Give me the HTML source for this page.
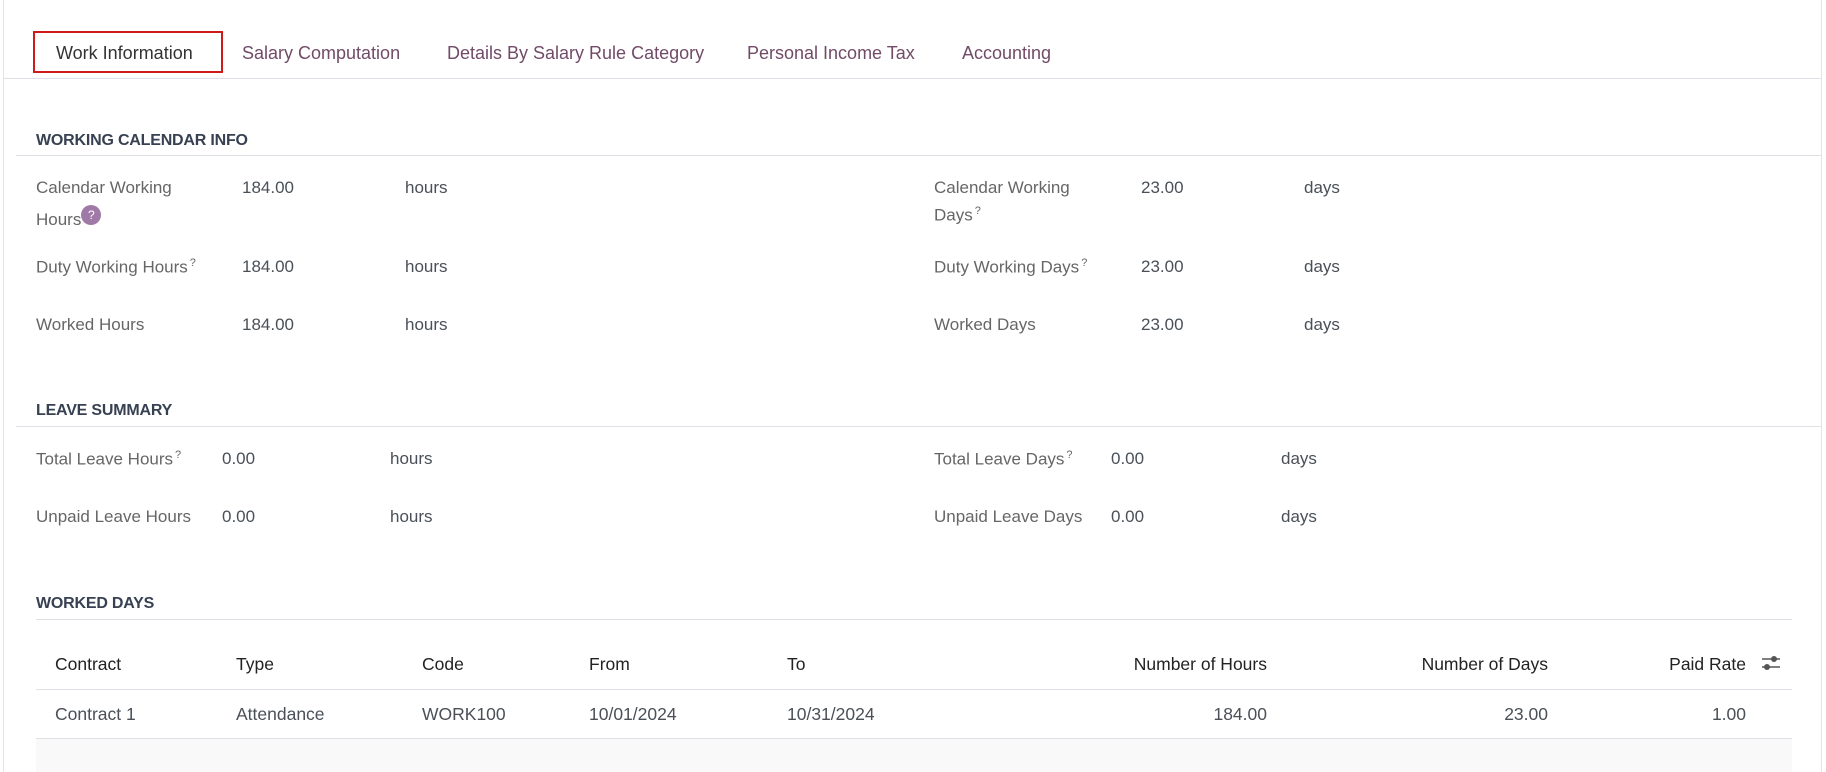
<!DOCTYPE html>
<html><head><meta charset="utf-8"><style>
body{margin:0;width:1826px;height:772px;overflow:hidden;background:#fff;font-family:"Liberation Sans",sans-serif;color:#495057;position:relative;font-size:17px}
.a{position:absolute;white-space:nowrap}
.l{color:#666}
.tab{color:#714B67;font-size:18px;top:43px}
.h{font-weight:bold;font-size:16px;color:#374151;letter-spacing:-0.2px}
.line{position:absolute;height:1px;background:#dee2e6}
.q{font-size:11px;vertical-align:super;margin-left:2px}
.r{text-align:right}
.t{font-size:17.5px}
</style></head><body>
<div style="position:absolute;left:3px;top:0;width:1px;height:772px;background:#e5e5e5"></div>
<div style="position:absolute;left:1821px;top:0;width:1px;height:772px;background:#e5e5e5"></div>
<div class="line" style="left:3px;width:1819px;top:78px"></div>
<div style="position:absolute;left:33px;top:31px;width:190px;height:42px;border:2px solid #d01919;box-sizing:border-box;background:#fff"></div>
<div class="a tab" style="left:56px;color:#333">Work Information</div>
<div class="a tab" style="left:242px">Salary Computation</div>
<div class="a tab" style="left:447px">Details By Salary Rule Category</div>
<div class="a tab" style="left:747px">Personal Income Tax</div>
<div class="a tab" style="left:962px">Accounting</div>

<div class="a h" style="left:36px;top:132px">WORKING CALENDAR INFO</div>
<div class="line" style="left:16px;width:1806px;top:155px"></div>
<div class="a l" style="left:36px;top:178px">Calendar Working</div>
<div class="a l" style="left:36px;top:205px">Hours<span style="display:inline-block;width:20px;height:20px;border-radius:50%;background:#a07aa6;color:#fff;font-size:12px;text-align:center;line-height:20px;vertical-align:6px">?</span></div>
<div class="a" style="left:242px;top:178px">184.00</div><div class="a" style="left:405px;top:178px">hours</div>
<div class="a l" style="left:934px;top:178px">Calendar Working</div>
<div class="a l" style="left:934px;top:205px">Days<span class="q">?</span></div>
<div class="a" style="left:1141px;top:178px">23.00</div><div class="a" style="left:1304px;top:178px">days</div>

<div class="a l" style="left:36px;top:257px">Duty Working Hours<span class="q">?</span></div>
<div class="a" style="left:242px;top:257px">184.00</div><div class="a" style="left:405px;top:257px">hours</div>
<div class="a l" style="left:934px;top:257px">Duty Working Days<span class="q">?</span></div>
<div class="a" style="left:1141px;top:257px">23.00</div><div class="a" style="left:1304px;top:257px">days</div>

<div class="a l" style="left:36px;top:315px">Worked Hours</div>
<div class="a" style="left:242px;top:315px">184.00</div><div class="a" style="left:405px;top:315px">hours</div>
<div class="a l" style="left:934px;top:315px">Worked Days</div>
<div class="a" style="left:1141px;top:315px">23.00</div><div class="a" style="left:1304px;top:315px">days</div>

<div class="a h" style="left:36px;top:402px">LEAVE SUMMARY</div>
<div class="line" style="left:16px;width:1806px;top:426px"></div>
<div class="a l" style="left:36px;top:449px">Total Leave Hours<span class="q">?</span></div>
<div class="a" style="left:222px;top:449px">0.00</div><div class="a" style="left:390px;top:449px">hours</div>
<div class="a l" style="left:934px;top:449px">Total Leave Days<span class="q">?</span></div>
<div class="a" style="left:1111px;top:449px">0.00</div><div class="a" style="left:1281px;top:449px">days</div>
<div class="a l" style="left:36px;top:507px">Unpaid Leave Hours</div>
<div class="a" style="left:222px;top:507px">0.00</div><div class="a" style="left:390px;top:507px">hours</div>
<div class="a l" style="left:934px;top:507px">Unpaid Leave Days</div>
<div class="a" style="left:1111px;top:507px">0.00</div><div class="a" style="left:1281px;top:507px">days</div>

<div class="a h" style="left:36px;top:595px">WORKED DAYS</div>
<div class="line" style="left:36px;width:1756px;top:619px"></div>
<div class="a t" style="left:55px;top:654px;color:#222">Contract</div>
<div class="a t" style="left:236px;top:654px;color:#222">Type</div>
<div class="a t" style="left:422px;top:654px;color:#222">Code</div>
<div class="a t" style="left:589px;top:654px;color:#222">From</div>
<div class="a t" style="left:787px;top:654px;color:#222">To</div>
<div class="a r t" style="right:559px;top:654px;color:#222">Number of Hours</div>
<div class="a r t" style="right:278px;top:654px;color:#222">Number of Days</div>
<div class="a r t" style="right:80px;top:654px;color:#222">Paid Rate</div>
<svg class="a" style="left:1760px;top:654px" width="22" height="18" viewBox="0 0 22 18"><path d="M2 5h18M2 13h18" stroke="#555" stroke-width="1.6"/><circle cx="14" cy="5" r="3" fill="#555"/><circle cx="7" cy="13" r="3" fill="#555"/></svg>
<div class="line" style="left:36px;width:1756px;top:689px"></div>
<div class="a t" style="left:55px;top:704px">Contract 1</div>
<div class="a t" style="left:236px;top:704px">Attendance</div>
<div class="a t" style="left:422px;top:704px">WORK100</div>
<div class="a t" style="left:589px;top:704px">10/01/2024</div>
<div class="a t" style="left:787px;top:704px">10/31/2024</div>
<div class="a r t" style="right:559px;top:704px">184.00</div>
<div class="a r t" style="right:278px;top:704px">23.00</div>
<div class="a r t" style="right:80px;top:704px">1.00</div>
<div class="line" style="left:36px;width:1756px;top:738px"></div>
<div style="position:absolute;left:36px;top:739px;width:1756px;height:33px;background:#f9f9f9"></div>
</body></html>
